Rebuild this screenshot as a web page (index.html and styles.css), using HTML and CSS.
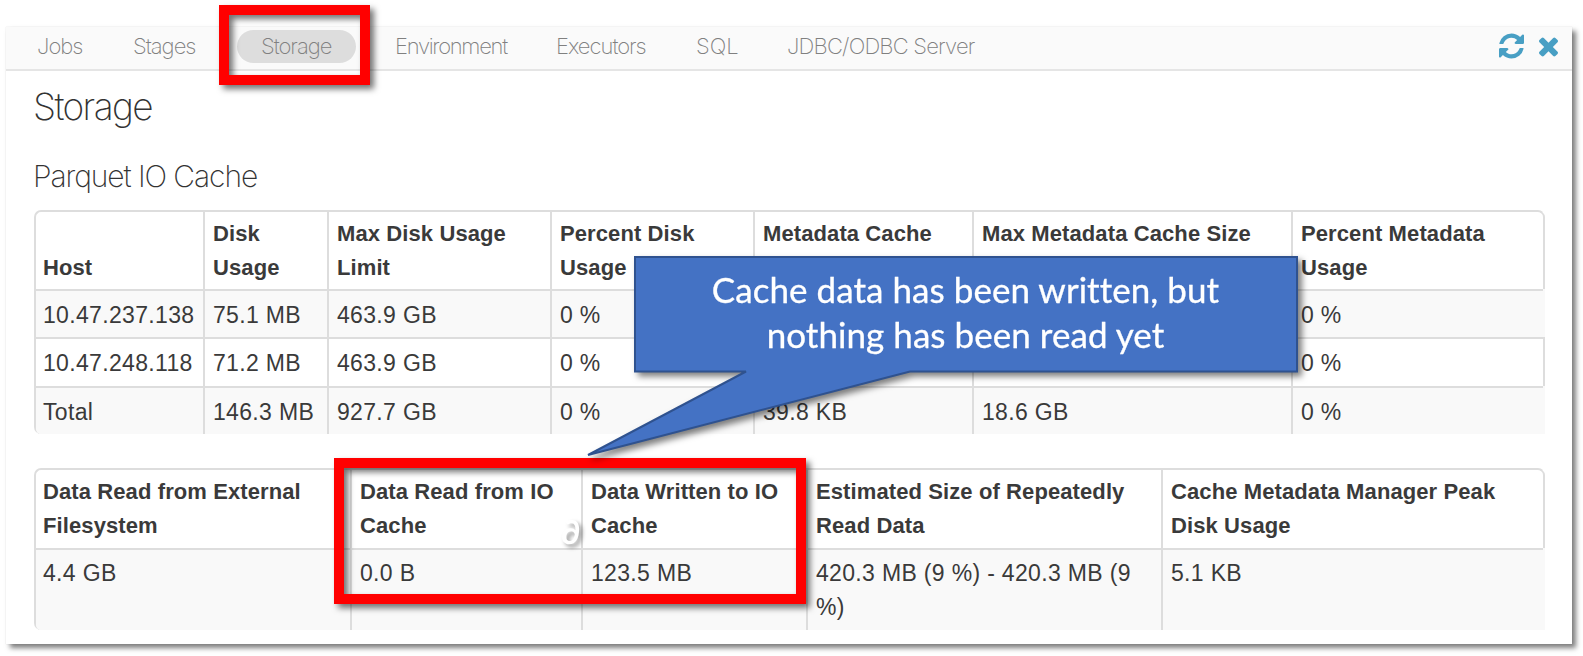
FILE: index.html
```html
<!DOCTYPE html>
<html lang="en">
<head>
<meta charset="utf-8">
<title>Storage</title>
<link rel="stylesheet" href="styles.css">
</head>
<body>
<main class="panel">
  <nav class="navbar">
    <a class="tab jobs">Jobs</a>
    <a class="tab stages">Stages</a>
    <a class="tab active">Storage</a>
    <a class="tab env">Environment</a>
    <a class="tab exec">Executors</a>
    <a class="tab sql">SQL</a>
    <a class="tab jdbc">JDBC/ODBC Server</a>
    <span class="actions">
      <svg class="refresh" viewBox="0 0 1536 1536"><path d="M1511 928q0 5-1 7-64 268-268 434.500T764 1536q-146 0-282.500-55T238 1324l-129 129q-19 19-45 19t-45-19-19-45V960q0-26 19-45t45-19h448q26 0 45 19t19 45-19 45l-137 137q71 66 161 102t187 36q134 0 250-65t186-179q11-17 53-117 8-23 30-23h192q13 0 22.500 9.500t9.500 22.500zm25-800v448q0 26-19 45t-45 19h-448q-26 0-45-19t-19-45 19-45l138-138Q969 256 768 256q-134 0-250 65T332 500q-11 17-53 117-8 23-30 23H50q-13 0-22.500-9.500T18 608v-7q65-268 270-434.500T768 0q146 0 284 55.500T1297 212l130-129q19-19 45-19t45 19 19 45z"/></svg>
      <svg class="close" viewBox="0 0 1188 1188"><path d="M1188 956q0 40-28 68l-136 136q-28 28-68 28t-68-28L594 866l-294 294q-28 28-68 28t-68-28L28 1024q-28-28-28-68t28-68l294-294L28 300Q0 272 0 232t28-68L164 28q28-28 68-28t68 28l294 294L888 28q28-28 68-28t68 28l136 136q28 28 28 68t-28 68L866 594l294 294q28 28 28 68z"/></svg>
    </span>
  </nav>
  <h1 class="title">Storage</h1>
  <h2 class="subtitle">Parquet IO Cache</h2>

  <table class="grid hosts">
    <colgroup><col class="a1"><col class="a2"><col class="a3"><col class="a4"><col class="a5"><col class="a6"><col class="a7"></colgroup>
    <thead><tr><th>Host</th><th>Disk<br>Usage</th><th>Max Disk Usage<br>Limit</th><th>Percent Disk<br>Usage</th><th>Metadata Cache<br>&nbsp;</th><th>Max Metadata Cache Size<br>&nbsp;</th><th>Percent Metadata<br>Usage</th></tr></thead>
    <tbody>
      <tr><td>10.47.237.138</td><td>75.1 MB</td><td>463.9 GB</td><td>0 %</td><td></td><td></td><td>0 %</td></tr>
      <tr><td>10.47.248.118</td><td>71.2 MB</td><td>463.9 GB</td><td>0 %</td><td></td><td></td><td>0 %</td></tr>
      <tr><td>Total</td><td>146.3 MB</td><td>927.7 GB</td><td>0 %</td><td>39.8 KB</td><td>18.6 GB</td><td>0 %</td></tr>
    </tbody>
  </table>

  <table class="grid totals">
    <colgroup><col class="b1"><col class="b2"><col class="b3"><col class="b4"><col class="b5"></colgroup>
    <thead><tr><th>Data Read from External<br>Filesystem</th><th>Data Read from IO<br>Cache</th><th>Data Written to IO<br>Cache</th><th>Estimated Size of Repeatedly<br>Read Data</th><th>Cache Metadata Manager Peak<br>Disk Usage</th></tr></thead>
    <tbody><tr><td>4.4 GB</td><td>0.0 B</td><td>123.5 MB</td><td>420.3 MB (9 %) - 420.3 MB (9<br>%)</td><td>5.1 KB</td></tr></tbody>
  </table>
</main>

<span class="stray">∂</span>
<div class="frame frame-tab"></div>
<div class="frame frame-data"></div>
<div class="callout">
  <svg class="bubble" viewBox="0 0 720 216"><path d="M50 5H712V119.500H325L3 203L161 119.500H50Z"/></svg>
  <p class="message">Cache data has been written, but<br>nothing has been read yet</p>
</div>
</body>
</html>
```
FILE: styles.css
```css
* { box-sizing: border-box; }
html, body { margin: 0; background: #fff; }
body { position: relative; width: 1583px; height: 656px; overflow: hidden; padding: 27px 0 0 6px; font-family: "Liberation Sans", Arial, sans-serif; color: #3a3a3a; }

.panel { width: 1566px; height: 617px; background: #fff; box-shadow: 4px 4px 5px rgba(0,0,0,.5), 0 0 1px #ddd; }
.navbar { display: flex; align-items: center; height: 44px; padding: 0 14px 3px 16px; background: #fafafa; border-bottom: 2px solid #e5e5e5; font-family: Inter, "Liberation Sans", sans-serif; font-weight: 200; font-size: 22px; color: #808080; }
.tab { flex: none; height: 33px; line-height: 33px; padding-left: 15px; white-space: nowrap; letter-spacing: -1px; }
.jobs { width: 95px; }
.stages { width: 120px; padding-left: 16px; }
.active { width: 119px; padding-left: 24px; border-radius: 17px; background: #ddd; }
.env { width: 185px; padding-left: 39px; letter-spacing: -1.3px; }
.exec { width: 140px; }
.sql { width: 91px; letter-spacing: 0; }
.jdbc { letter-spacing: -.8px; }
.actions { display: flex; align-items: center; gap: 15px; margin-left: auto; padding-bottom: 1px; fill: #489fc4; }
.refresh { width: 25px; height: 26px; }
.close { width: 19px; height: 20px; margin-top: 2px; }

.title, .subtitle { margin: 0; padding-left: 27px; font-family: Inter, "Liberation Sans", sans-serif; font-weight: 200; color: #333; white-space: nowrap; }
.title { height: 73px; font-size: 37px; line-height: 71px; letter-spacing: -1.6px; }
.subtitle { height: 66px; font-size: 30px; line-height: 64px; letter-spacing: -1.08px; }

.grid { width: 1511px; margin-left: 28px; table-layout: fixed; border-collapse: separate; border-spacing: 0; border: 2px solid #ddd; border-right-color: transparent; border-bottom: 0; border-radius: 7px; font-size: 22px; line-height: 33.5px; }
.grid th, .grid td { padding: 8px 0 0 8px; text-align: left; vertical-align: top; white-space: nowrap; border-left: 2px solid #ddd; }
.grid th { height: 77px; padding-top: 5px; padding-bottom: 5px; vertical-align: bottom; font-weight: 700; letter-spacing: .1px; }
.grid td { height: 48px; border-top: 2px solid #ddd; font-size: 23px; letter-spacing: .33px; }
.grid tbody tr:nth-child(2) td { height: 49px; }
.grid th:first-child, .grid td:first-child { padding-left: 7px; border-left: 0; }
.grid tbody tr:nth-child(odd) td { background: #f9f9f9; }
.grid th:last-child { box-shadow: 2px 0 0 #ddd; border-top-right-radius: 5px; }
.grid tbody tr:nth-child(even) td:last-child { box-shadow: 2px 0 0 #ddd; }
.grid tbody tr:nth-child(odd) td:last-child { box-shadow: 2px 0 0 #f9f9f9; }
.grid tbody tr:last-child td:first-child { border-bottom-left-radius: 5px; }
.grid.totals { margin-top: 34px; }
.totals th { height: 78px; padding-top: 4px; padding-bottom: 6px; }
.totals td { height: 82px; padding-top: 7px; }

.a1 { width: 167px; } .a2 { width: 124px; } .a3 { width: 223px; } .a4 { width: 203px; } .a5 { width: 219px; } .a6 { width: 319px; }
.b1 { width: 314px; } .b2 { width: 231px; } .b3 { width: 225px; } .b4 { width: 355px; }

/* Annotations drawn over the page */
.frame { position: absolute; border: 10px solid #f00; filter: drop-shadow(4px 4px 3px rgba(0,0,0,.55)); }
.frame-tab { left: 219px; top: 5px; width: 151px; height: 80px; }
.frame-data { left: 334px; top: 458px; width: 472px; height: 146px; }
.stray { position: absolute; left: 561px; top: 511px; color: #fff; font: 700 33px/40px Lato, sans-serif; filter: drop-shadow(3px 3px 2px rgba(0,0,0,.4)); }
.callout { position: absolute; left: 585px; top: 252px; width: 720px; height: 216px; filter: drop-shadow(4px 4px 3px rgba(0,0,0,.5)); }
.bubble { display: block; width: 720px; height: 216px; }
.bubble path { fill: #4472c4; stroke: #2f528f; stroke-width: 2; }
.message { position: absolute; left: 49px; top: 15px; width: 663px; margin: 0; text-align: center; color: #fff; font: 35px/45px Lato, sans-serif; letter-spacing: .05px; font-variant-ligatures: common-ligatures; -webkit-text-stroke: .3px #fff; white-space: nowrap; }
```
